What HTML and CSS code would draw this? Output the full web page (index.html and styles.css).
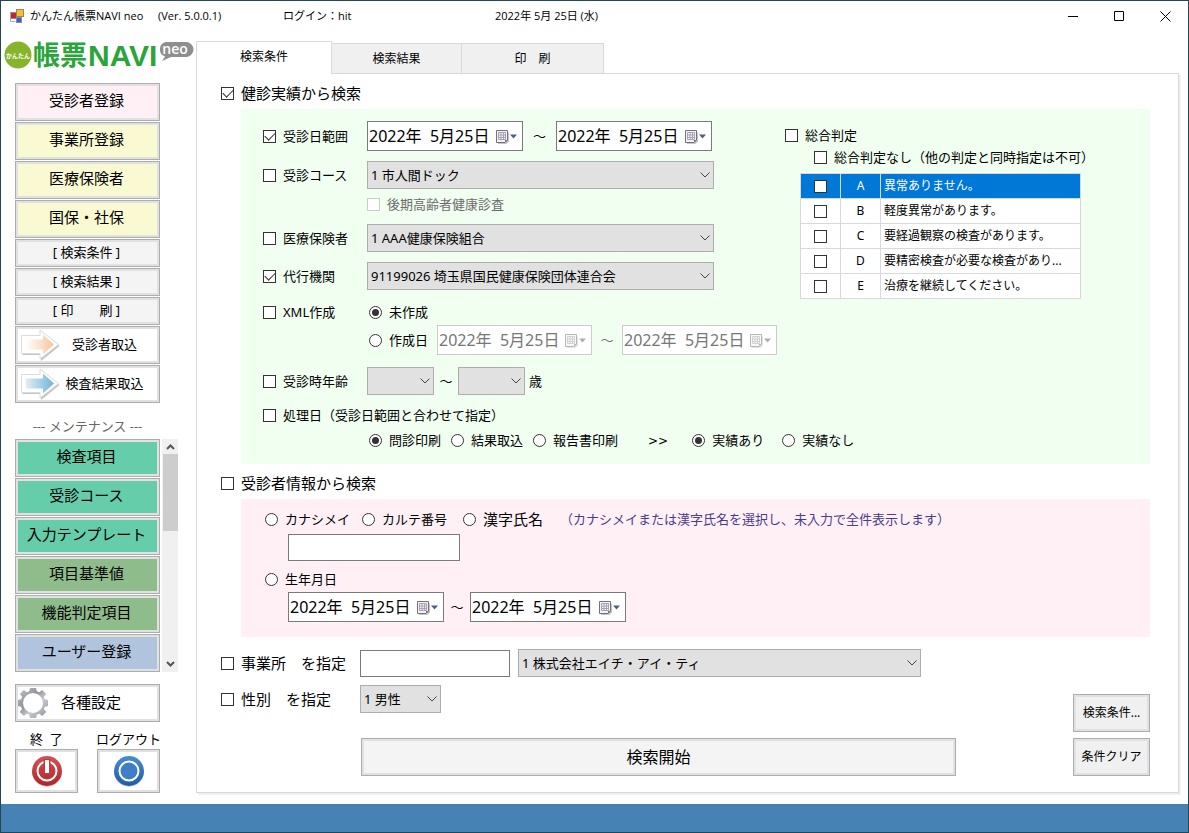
FILE: index.html
```html
<!DOCTYPE html>
<html lang="ja">
<head>
<meta charset="utf-8">
<title>かんたん帳票NAVI neo</title>
<link rel="stylesheet" href="styles.css">
</head>
<body>
<svg class="defs" width="0" height="0" aria-hidden="true">
  <defs>
    <linearGradient id="orange"><stop offset="0" stop-color="#fff"/><stop offset="1" stop-color="#f9c39b"/></linearGradient>
    <linearGradient id="blue"><stop offset="0" stop-color="#e3edf3"/><stop offset="1" stop-color="#6fb3da"/></linearGradient>
    <linearGradient id="steel" x2="1" y2="1"><stop offset="0" stop-color="#c4c6ca"/><stop offset=".4" stop-color="#8f9298"/><stop offset=".6" stop-color="#c9cbcf"/><stop offset="1" stop-color="#8b8e94"/></linearGradient>
    <linearGradient id="red" x2="0" y2="1"><stop offset="0" stop-color="#d55353"/><stop offset="1" stop-color="#b02428"/></linearGradient>
    <linearGradient id="navy" x2="0" y2="1"><stop offset="0" stop-color="#4a8cd2"/><stop offset="1" stop-color="#1f5ca8"/></linearGradient>
    <symbol id="cal" viewBox="0 0 22 14">
      <path d="M2 1.500h11v9l-2.500 2.500H2z" fill="#8d8796" opacity=".5" transform="translate(0 1)"/>
      <path d="M.5 .5h11v9.500l-2.500 2.500H.5z" fill="#f4f2f8" stroke="#77716f"/>
      <path d="M2.500 2.500h7v7h-7zM2.500 5h7M2.500 7.500h7M5 2.500v7M7.500 2.500v7" stroke="#a6a3b5" fill="none"/>
      <path d="M11.500 10H9v2.500z" fill="#77716f"/>
      <path d="M14 4.500h7l-3.500 4z" fill="#4c5f85"/>
    </symbol>
    <symbol id="arrow" viewBox="0 0 42 32">
      <path d="M3.500 7H22V1.500L40.500 16 22 31V25H3.500z" fill="#888" opacity=".5" transform="translate(0 1)"/>
      <path d="M2.500 6.500H21V1L39.500 15.500 21 30V24.500H2.500z" fill="#fff" stroke="#dcdcdc"/>
      <path d="M7 10.500H24V5.500L35 15.500 24 25.500V20.500H7z"/>
    </symbol>
  </defs>
</svg>
<div class="window">
  <header class="titlebar">
    <svg class="app-icon" viewBox="0 0 14 14"><rect x=".5" y="3.500" width="6" height="6" fill="#c4252f" stroke="#8d8d8d"/><rect x="6.500" y=".5" width="7" height="7" fill="#f5bd2f" stroke="#9a8a55"/><rect x="6.500" y="8.500" width="5" height="5" fill="#3b63c4" stroke="#7b8cb5"/><path d="M.5 3.500v9h5" fill="none" stroke="#aaa"/></svg>
    <span class="app-name">かんたん帳票NAVI neo</span>
    <span class="app-ver">(Ver. 5.0.0.1)</span>
    <span class="app-user">ログイン：hit</span>
    <span class="app-date">2022年 5月 25日 (水)</span>
    <div class="win-controls">
      <button type="button" aria-label="最小化"><svg viewBox="0 0 11 11"><path d="M0 5.500h10" /></svg></button>
      <button type="button" aria-label="最大化"><svg viewBox="0 0 11 11"><path d="M.5 .5h9v9h-9z"/></svg></button>
      <button type="button" aria-label="閉じる"><svg viewBox="0 0 11 11"><path d="M.5 .5l10 10M10.500 .5l-10 10"/></svg></button>
    </div>
  </header>

  <div class="body">
    <nav class="sidebar">
      <svg class="logo" viewBox="0 -8 190 44" role="img" aria-label="かんたん帳票NAVI neo">
        <circle cx="14" cy="16" r="13.500" fill="#86b52c"/>
        <path d="M162 3h20a7.500 7.500 0 0 1 0 15h-15l-9 4 3-4.500a7.500 7.500 0 0 1 1-14.500z" fill="#8f8f8f"/>
        <text x="14" y="19" class="logo-round">かんたん</text>
        <text x="29" y="26" class="logo-kanji">帳票</text>
        <text x="84" y="27" class="logo-latin">NAVI</text>
        <text x="171" y="15" class="logo-neo">neo</text>
      </svg>
      <div class="stack">
        <button type="button" class="btn nav pink">受診者登録</button>
        <button type="button" class="btn nav cream">事業所登録</button>
        <button type="button" class="btn nav cream">医療保険者</button>
        <button type="button" class="btn nav cream">国保・社保</button>
        <button type="button" class="btn sub">[ 検索条件 ]</button>
        <button type="button" class="btn sub">[ 検索結果 ]</button>
        <button type="button" class="btn sub">[ 印　　刷 ]</button>
        <button type="button" class="btn import"><svg class="arrow" fill="url(#orange)"><use href="#arrow"/></svg><span>受診者取込</span></button>
        <button type="button" class="btn import"><svg class="arrow" fill="url(#blue)"><use href="#arrow"/></svg><span>検査結果取込</span></button>
      </div>
      <p class="caption">--- メンテナンス ---</p>
      <div class="maint">
        <div class="stack">
          <button type="button" class="btn nav mint">検査項目</button>
          <button type="button" class="btn nav mint">受診コース</button>
          <button type="button" class="btn nav mint">入力テンプレート</button>
          <button type="button" class="btn nav sage">項目基準値</button>
          <button type="button" class="btn nav sage">機能判定項目</button>
          <button type="button" class="btn nav steel">ユーザー登録</button>
        </div>
        <div class="scrollbar">
          <svg viewBox="0 0 9 6"><path d="M1 5l3.500-3.500L8 5"/></svg>
          <div class="thumb"></div>
          <svg viewBox="0 0 9 6"><path d="M1 1l3.500 3.500L8 1"/></svg>
        </div>
      </div>
      <button type="button" class="btn nav settings">
        <svg class="gear" viewBox="0 0 30 30"><path fill="url(#steel)" fill-rule="evenodd" d="M12 0h6l.8 3.200 2.400 1 3-2.100 4 4-2.300 3 1 2.100 3.100.8v6l-3.100.8-1 2.400 2.300 2.700-4 4-3-2.100-2.400 1-.8 3.200h-6l-.8-3.200-2.400-1-3 2.100-4-4 2.300-3-1-2.100L0 18v-6l3.100-.8 1-2.400L1.800 6.100l4-4 3 2.100 2.400-1zM15 5a10 10 0 1 0 0 20 10 10 0 0 0 0-20z"/></svg>
        <span>各種設定</span>
      </button>
      <div class="exits">
        <div class="exit">
          <span id="quit">終&nbsp; 了</span>
          <button type="button" class="btn" aria-labelledby="quit"><svg viewBox="0 0 32 32"><circle cx="16" cy="17" r="15" fill="#999" opacity=".4"/><circle cx="16" cy="16" r="15" fill="url(#red)"/><circle cx="16" cy="16" r="9.500" fill="none" stroke="#fff" stroke-width="2"/><path d="M16 4v15" stroke="#c23c3f" stroke-width="7"/><path d="M16 5v13" stroke="#fff" stroke-width="4"/></svg></button>
        </div>
        <div class="exit">
          <span id="logout">ログアウト</span>
          <button type="button" class="btn" aria-labelledby="logout"><svg viewBox="0 0 32 32"><circle cx="16" cy="17" r="15" fill="#999" opacity=".4"/><circle cx="16" cy="16" r="15" fill="url(#navy)"/><circle cx="16" cy="16" r="9.500" fill="#3e7fc6" stroke="#fff" stroke-width="2"/></svg></button>
        </div>
      </div>
    </nav>

    <main class="main">
      <div class="tabs" role="tablist">
        <button type="button" role="tab" class="tab active" aria-selected="true">検索条件</button>
        <button type="button" role="tab" class="tab">検索結果</button>
        <button type="button" role="tab" class="tab wide">印　刷</button>
      </div>
      <form class="panel">
        <div class="section-head"><label class="opt big"><input type="checkbox" checked>健診実績から検索</label></div>
        <section class="box green">
          <div class="criteria">
            <div class="row">
              <label class="opt key"><input type="checkbox" checked>受診日範囲</label>
              <span class="date"><input type="text" value="2022年  5月25日" aria-label="受診日 開始"><button type="button" aria-label="カレンダー"><svg><use href="#cal"/></svg></button></span>
              <span class="tilde">～</span>
              <span class="date"><input type="text" value="2022年  5月25日" aria-label="受診日 終了"><button type="button" aria-label="カレンダー"><svg><use href="#cal"/></svg></button></span>
            </div>
            <div class="row g10">
              <label class="opt key"><input type="checkbox">受診コース</label>
              <select class="long" aria-label="受診コース"><option>1 市人間ドック</option></select>
            </div>
            <div class="row line g5 indent">
              <label class="opt off"><input type="checkbox" disabled>後期高齢者健康診査</label>
            </div>
            <div class="row g10">
              <label class="opt key"><input type="checkbox">医療保険者</label>
              <select class="long" aria-label="医療保険者"><option>1 AAA健康保険組合</option></select>
            </div>
            <div class="row g10">
              <label class="opt key"><input type="checkbox" checked>代行機関</label>
              <select class="long" aria-label="代行機関"><option>91199026 埼玉県国民健康保険団体連合会</option></select>
            </div>
            <div class="row line g12">
              <label class="opt key"><input type="checkbox">XML作成</label>
              <label class="opt sub-opt"><input type="radio" name="xml" checked>未作成</label>
            </div>
            <div class="row g3 indent">
              <label class="opt sub-opt made"><input type="radio" name="xml">作成日</label>
              <span class="date"><input type="text" value="2022年  5月25日" aria-label="作成日 開始" disabled><button type="button" aria-label="カレンダー" disabled><svg><use href="#cal"/></svg></button></span>
              <span class="tilde off">～</span>
              <span class="date"><input type="text" value="2022年  5月25日" aria-label="作成日 終了" disabled><button type="button" aria-label="カレンダー" disabled><svg><use href="#cal"/></svg></button></span>
            </div>
            <div class="row g12">
              <label class="opt key"><input type="checkbox">受診時年齢</label>
              <select class="age" aria-label="年齢 下限"><option></option></select>
              <span class="tilde narrow">～</span>
              <select class="age" aria-label="年齢 上限"><option></option></select>
              <span class="unit">歳</span>
            </div>
            <div class="row line g10">
              <label class="opt"><input type="checkbox">処理日（受診日範囲と合わせて指定）</label>
            </div>
            <div class="row line g5 indent choices">
              <label class="opt sub-opt"><input type="radio" name="proc" checked>問診印刷</label>
              <label class="opt"><input type="radio" name="proc">結果取込</label>
              <label class="opt"><input type="radio" name="proc">報告書印刷</label>
              <span class="chev">&gt;&gt;</span>
              <label class="opt result"><input type="radio" name="res" checked>実績あり</label>
              <label class="opt"><input type="radio" name="res">実績なし</label>
            </div>
          </div>
          <div class="judge">
            <label class="opt"><input type="checkbox">総合判定</label>
            <label class="opt none"><input type="checkbox">総合判定なし（他の判定と同時指定は不可）</label>
            <table>
              <colgroup><col class="c1"><col class="c2"><col></colgroup>
              <tbody>
                <tr class="sel"><td><input type="checkbox" aria-label="A"></td><td>A</td><td>異常ありません。</td></tr>
                <tr><td><input type="checkbox" aria-label="B"></td><td>B</td><td>軽度異常があります。</td></tr>
                <tr><td><input type="checkbox" aria-label="C"></td><td>C</td><td>要経過観察の検査があります。</td></tr>
                <tr><td><input type="checkbox" aria-label="D"></td><td>D</td><td>要精密検査が必要な検査があり...</td></tr>
                <tr><td><input type="checkbox" aria-label="E"></td><td>E</td><td>治療を継続してください。</td></tr>
              </tbody>
            </table>
          </div>
        </section>

        <div class="section-head"><label class="opt big"><input type="checkbox">受診者情報から検索</label></div>
        <section class="box rose">
          <div class="row line names">
            <label class="opt"><input type="radio" name="who">カナシメイ</label>
            <label class="opt"><input type="radio" name="who">カルテ番号</label>
            <label class="opt big tight"><input type="radio" name="who">漢字氏名</label>
            <span class="hint">（カナシメイまたは漢字氏名を選択し、未入力で全件表示します）</span>
          </div>
          <div class="row inner g5"><input class="text" type="text" aria-label="氏名・番号"></div>
          <div class="row line g8"><label class="opt"><input type="radio" name="who">生年月日</label></div>
          <div class="row inner g3">
            <span class="date"><input type="text" value="2022年  5月25日" aria-label="生年月日 開始"><button type="button" aria-label="カレンダー"><svg><use href="#cal"/></svg></button></span>
            <span class="tilde mid">～</span>
            <span class="date"><input type="text" value="2022年  5月25日" aria-label="生年月日 終了"><button type="button" aria-label="カレンダー"><svg><use href="#cal"/></svg></button></span>
          </div>
        </section>

        <div class="foot">
          <div class="foot-main">
            <div class="row">
              <label class="opt big wide-key"><input type="checkbox">事業所　を指定</label>
              <input class="text office" type="text" aria-label="事業所番号">
              <select class="grow" aria-label="事業所"><option>1 株式会社エイチ・アイ・ティ</option></select>
            </div>
            <div class="row">
              <label class="opt big wide-key"><input type="checkbox">性別　を指定</label>
              <select class="sex" aria-label="性別"><option>1 男性</option></select>
            </div>
            <button type="button" class="btn start">検索開始</button>
          </div>
          <div class="foot-side">
            <button type="button" class="btn small">検索条件...</button>
            <button type="button" class="btn small">条件クリア</button>
          </div>
        </div>
      </form>
    </main>
  </div>
  <footer class="status"></footer>
</div>
</body>
</html>
```
FILE: styles.css
```css
* { box-sizing: border-box; }
body {
  margin: 0;
  background: #fff;
  color: #000;
  font: 13px/20px "Noto Sans", "Noto Sans CJK JP", sans-serif;
}
button, input, select { font: inherit; color: inherit; margin: 0; }
.defs { position: absolute; }
.window {
  min-height: 100vh;
  display: flex;
  flex-direction: column;
  border: 1px solid #24474f;
}

/* title bar */
.titlebar {
  display: flex;
  align-items: center;
  height: 30px;
  padding-left: 9px;
  font-family: "Open Sans", "Noto Sans CJK JP", sans-serif;
  font-size: 11px;
  white-space: nowrap;
}
.app-icon { width: 14px; height: 14px; margin-right: 6px; }
.app-name { width: 128px; }
.app-ver { width: 125px; }
.app-user { width: 212px; }
.win-controls { display: flex; margin-left: auto; }
.win-controls button {
  width: 46px;
  height: 29px;
  padding: 0;
  border: 0;
  background: none;
  display: grid;
  place-items: center;
}
.win-controls svg { width: 11px; height: 11px; fill: none; stroke: #000; }

.body { flex: 1; display: flex; }

/* buttons */
.btn {
  border: 1px solid #adadad;
  box-shadow: inset 0 0 0 2px #e1e1e1;
  background: #fff;
  padding: 0;
  text-align: center;
  white-space: nowrap;
}
.nav { height: 38px; font-size: 15px; padding: 0 2px 5px 0; }
.sub { height: 28px; background: #f4f4f4; padding: 0 2px 2px 0; }
.pink { background: #fff0f5; }
.cream { background: #fafad2; }
.mint { background: #66cdaa; }
.sage { background: #8fbc8b; }
.steel { background: #b0c4de; }

/* sidebar */
.sidebar {
  width: 195px;
  flex: none;
  display: flex;
  flex-direction: column;
  padding: 0 0 0 14px;
}
.logo { width: 190px; height: 44px; margin: 0 0 8px -11px; overflow: visible; }
.logo text { font-family: "Noto Sans CJK JP", sans-serif; font-weight: 700; }
.logo .logo-round { font-size: 6px; fill: #fff; text-anchor: middle; }
.logo .logo-kanji { font-size: 27px; fill: #2ba53a; }
.logo .logo-latin { font-family: "Liberation Sans", sans-serif; font-size: 30px; fill: #2ba53a; }
.logo .logo-neo { font-family: "Open Sans", sans-serif; font-size: 14px; font-weight: 600; fill: #fff; text-anchor: middle; }
.stack { width: 145px; display: flex; flex-direction: column; gap: 1px; }
.import { height: 38px; display: flex; align-items: center; padding-left: 3px; }
.import span { flex: 1; padding: 0 11px 2px 0; }
.arrow { width: 42px; height: 32px; flex: none; }
.caption { width: 145px; margin: 13px 0 3px; text-align: center; color: #666; }
.maint { display: flex; gap: 2px; margin-bottom: 12px; }
.scrollbar {
  width: 16px;
  background: #f0f0f0;
  display: flex;
  flex-direction: column;
  align-items: center;
  padding: 5px 0;
}
.scrollbar svg { width: 9px; height: 6px; fill: none; stroke: #555; stroke-width: 2; }
.thumb { width: 15px; height: 77px; background: #cdcdcd; margin: 4px 0 auto; }
.settings { width: 145px; display: flex; align-items: center; padding: 0 0 0 2px; }
.settings span { padding: 0 0 3px 13px; }
.gear { width: 30px; height: 30px; }
.exits { display: flex; gap: 19px; margin-top: 7px; }
.exit { width: 63px; display: flex; flex-direction: column; align-items: center; white-space: nowrap; }
.exit .btn { width: 63px; height: 44px; display: grid; place-items: center; }
.exit svg { width: 32px; height: 32px; }

/* tabs and panel */
.main { flex: 1; display: flex; flex-direction: column; padding: 10px 9px 11px 0; }
.tabs { display: flex; align-items: flex-end; font-size: 12px; }
.tab {
  width: 130px;
  height: 30px;
  padding: 0;
  background: #f0f0f0;
  border: 1px solid #d9d9d9;
  border-width: 1px 1px 0 0;
}
.tab.active {
  width: 136px;
  height: 33px;
  margin-bottom: -1px;
  padding-bottom: 2px;
  background: #fff;
  border-left-width: 1px;
  z-index: 1;
}
.tab.wide { width: 142px; }
.panel {
  flex: 1;
  border: 1px solid #d9d9d9;
  box-shadow: 2px 2px 0 #f0f0f0;
  padding: 0 28px 16px 24px;
}
.section-head { height: 35px; padding-top: 3px; display: flex; align-items: center; }
.box { margin-left: 20px; display: flex; }
.green { background: #f0fff0; padding: 12px 40px 14px 22px; }
.rose { background: #fff0f5; padding: 10px 24px 15px; flex-direction: column; }

/* options */
.opt { display: flex; align-items: center; gap: 7px; white-space: nowrap; }
.big { font-size: 15px; }
.off { color: #6d6d6d; }
.key { width: 104px; }
input[type="checkbox"], input[type="radio"] {
  appearance: none;
  flex: none;
  width: 13px;
  height: 13px;
  border: 1px solid #333;
  background: #fff;
  display: grid;
  place-items: center;
}
input[type="radio"] { border-radius: 50%; }
input[type="checkbox"]:checked::before {
  content: "";
  width: 9px;
  height: 5px;
  border: solid #333;
  border-width: 0 0 1px 1px;
  transform: translateY(-1px) rotate(-45deg);
}
input[type="radio"]:checked::before {
  content: "";
  width: 7px;
  height: 7px;
  border-radius: 50%;
  background: #333;
}
input[type="checkbox"]:disabled { border-color: #ccc; }

.row { display: flex; align-items: center; }
.line { height: 20px; }
.indent { padding-left: 104px; }
.inner { padding-left: 23px; }
.g3 { margin-top: 3px; }
.g5 { margin-top: 5px; }
.g8 { margin-top: 8px; }
.g10 { margin-top: 10px; }
.g12 { margin-top: 12px; }
.sub-opt { padding-left: 2px; }
.made { width: 70px; }

.date {
  width: 156px;
  height: 30px;
  display: flex;
  align-items: center;
  border: 1px solid #7a7a7a;
  background: #fff;
}
.date input {
  flex: 1;
  min-width: 0;
  height: 26px;
  border: 0;
  padding: 0 0 3px 1px;
  background: none;
  font-size: 16px;
}
.date button { width: 26px; height: 26px; border: 0; padding: 2px 0 0; background: none; }
.date svg { width: 22px; height: 14px; display: block; }
.date:has(:disabled) { width: 155px; border-color: #ccc; }
.date input:disabled { color: #777; }
.date button:disabled { opacity: .5; filter: grayscale(1); }
.tilde { width: 33px; text-align: center; }
.tilde.off { width: 30px; color: #777; }
.tilde.narrow { width: 24px; }
.tilde.mid { width: 26px; }

select {
  appearance: none;
  height: 28px;
  border: 1px solid #adadad;
  border-radius: 0;
  padding: 0 20px 1px 3px;
  background: #e1e1e1 url("data:image/svg+xml,%3Csvg xmlns='http://www.w3.org/2000/svg' width='10' height='6'%3E%3Cpath d='M.5 .5L5 5 9.500 .5' fill='none' stroke='%23444'/%3E%3C/svg%3E") no-repeat right 3px center;
}
.long { width: 347px; }
.age { width: 67px; }
.unit { padding-left: 4px; }
.choices .opt + .opt { margin-left: 10px; }
.chev { margin: 2px 0 0 30px; font-family: "DejaVu Sans", sans-serif; font-size: 12px; }
.result { margin-left: 24px; }
.choices .result + .opt { margin-left: 18px; }

/* judgement list */
.criteria { width: 522px; flex: none; }
.judge { padding-top: 4px; flex: 1; min-width: 0; }
.judge .none { margin: 2px 0 6px 29px; }
.judge table {
  width: 281px;
  margin-left: 15px;
  border-collapse: collapse;
  table-layout: fixed;
  background: #fff;
  font-size: 12px;
  line-height: 16px;
}
.c1, .c2 { width: 40px; }
.judge td { height: 25px; padding: 0 3px; border: 1px solid #d9d9d9; white-space: nowrap; }
.judge td:nth-child(1) input { margin: 0 auto; }
.judge td:nth-child(2) { text-align: center; }
.sel { background: #0078d7; color: #fff; }

/* patient criteria */
.names .opt + .opt { margin-left: 12px; }
.names .opt.tight { margin-left: 16px; }
.hint { margin-left: 17px; color: #483d8b; white-space: nowrap; }
.text { width: 172px; height: 27px; border: 1px solid #7a7a7a; background: #fff; padding: 0 3px; }

/* lower controls */
.foot { display: flex; align-items: flex-end; gap: 117px; margin-top: 12px; }
.foot-main { flex: 1; display: flex; flex-direction: column; gap: 8px; }
.wide-key { width: 139px; }
.office { width: 150px; margin-right: 8px; }
.grow { flex: 1; margin-right: 35px; }
.sex { width: 81px; }
.start { height: 38px; margin: 17px 0 0 140px; background: #f4f4f4; font-size: 16px; }
.foot-side { display: flex; flex-direction: column; gap: 6px; }
.small { width: 77px; height: 38px; background: #f0f0f0; font-size: 12px; }

.status { height: 28px; background: #4682b4; }
```
